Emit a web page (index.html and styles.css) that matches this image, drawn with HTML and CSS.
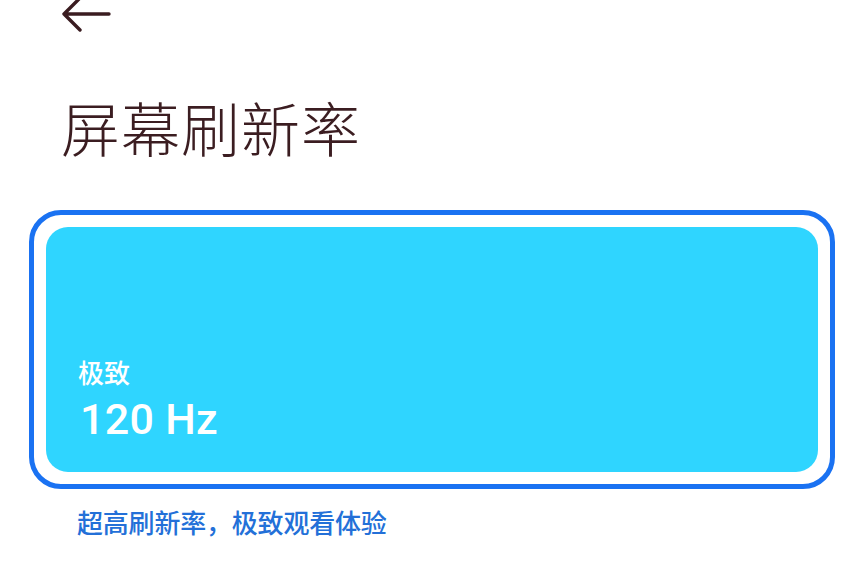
FILE: index.html
```html
<!DOCTYPE html>
<html lang="zh-CN">
<head>
<meta charset="utf-8">
<title>屏幕刷新率</title>
<link rel="stylesheet" href="styles.css">
</head>
<body>
<div class="page">
  <div class="topbar">
    <svg class="back" width="54" height="34" viewBox="0 0 54 34" aria-hidden="true">
      <path d="M20 -2 L4 14 L20 30 M4 14 H49" fill="none" stroke="#3a1c20" stroke-width="3.4" stroke-linecap="round" stroke-linejoin="round"/>
    </svg>
  </div>
  <h1 class="title">屏幕刷新率</h1>
  <div class="card">
    <div class="card-inner">
      <div class="mode">极致</div>
      <div class="rate">120 Hz</div>
    </div>
  </div>
  <p class="caption">超高刷新率，极致观看体验</p>
</div>
</body>
</html>
```
FILE: styles.css
```css
html, body {
  margin: 0;
  padding: 0;
  background: #ffffff;
}
.page {
  width: 864px;
  height: 571px;
  overflow: hidden;
  font-family: "Noto Sans CJK SC", "Noto Sans", sans-serif;
}
.topbar {
  height: 34px;
  padding-left: 60px;
}
.back {
  display: block;
  overflow: visible;
}
.title {
  margin: 58px 0 0 61px;
  font-size: 59px;
  line-height: 70px;
  font-weight: 300;
  color: #3b1d21;
  letter-spacing: 1px;
}
.card {
  margin: 48px 29px 0 29px;
  border: 5px solid #1a72f2;
  border-radius: 32px;
  padding: 12px;
}
.card-inner {
  height: 245px;
  box-sizing: border-box;
  background: #2fd5ff;
  border-radius: 22px;
  padding: 0 0 22px 32px;
  display: flex;
  flex-direction: column;
  justify-content: flex-end;
  color: #ffffff;
}
.mode {
  font-size: 26px;
  line-height: 34px;
  font-weight: 500;
}
.rate {
  font-family: Roboto, "Noto Sans", sans-serif;
  font-size: 43px;
  line-height: 61px;
  font-weight: 500;
  margin-left: 2px;
  letter-spacing: 0.3px;
}
.caption {
  margin: 16px 0 0 77px;
  font-size: 26px;
  line-height: 34px;
  color: #2370d8;
  font-weight: 500;
  letter-spacing: -0.2px;
}
```
